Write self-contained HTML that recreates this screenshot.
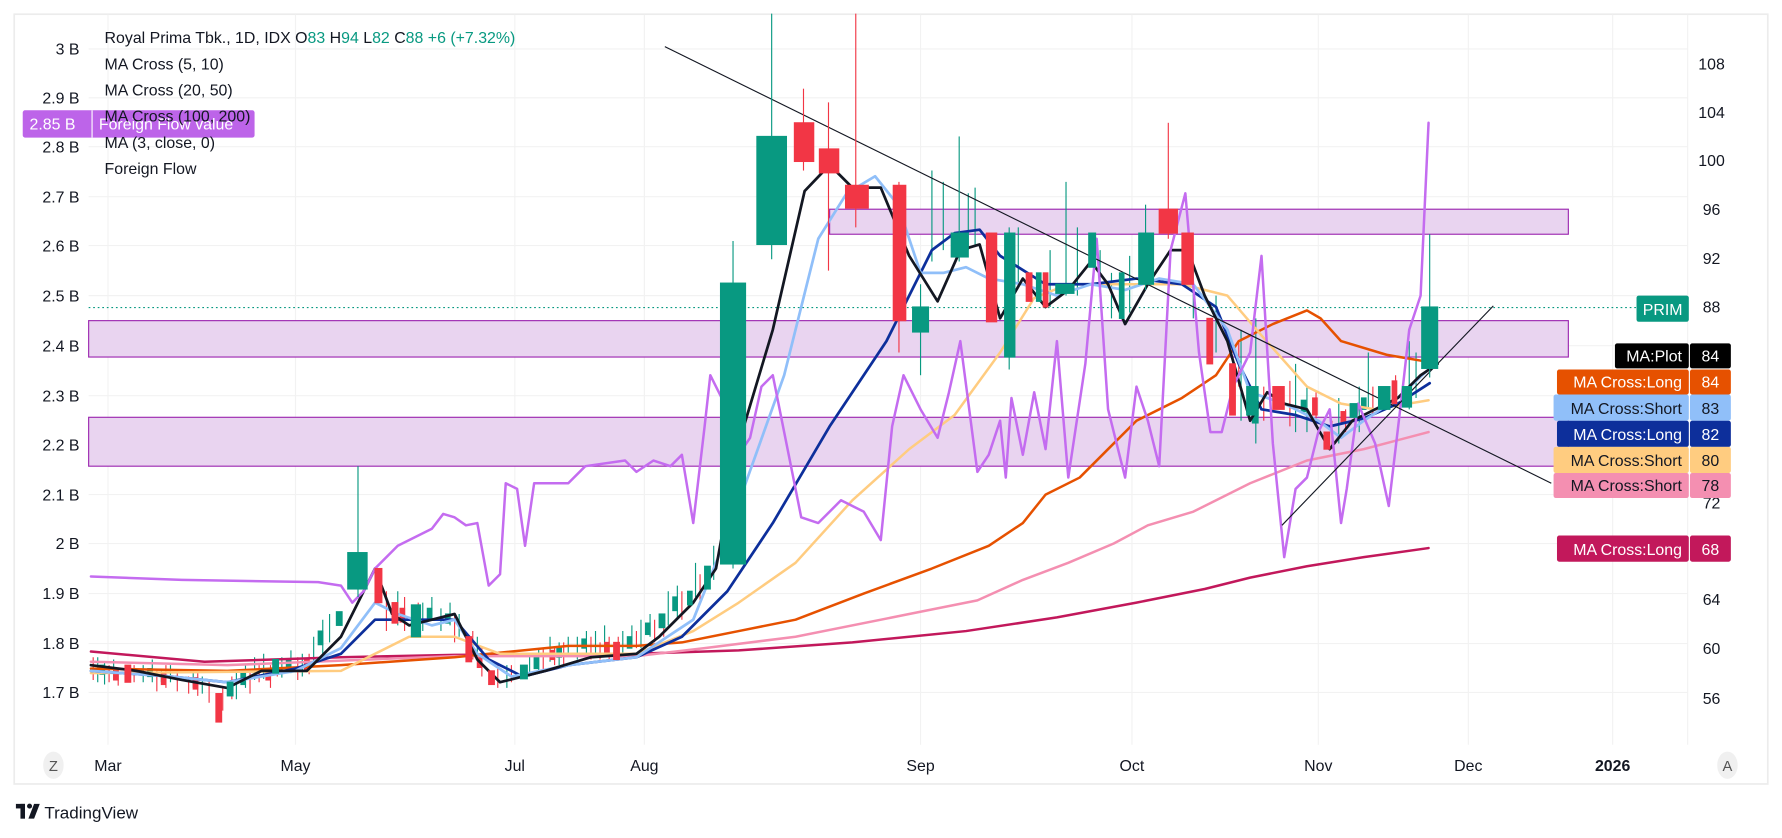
<!DOCTYPE html>
<html><head><meta charset="utf-8"><style>
html,body{margin:0;padding:0;background:#fff;width:1782px;height:838px;overflow:hidden}
svg{display:block}
text{font-family:"Liberation Sans",sans-serif}
</style></head><body>
<svg width="1782" height="838" viewBox="0 0 1568 737" preserveAspectRatio="none" xmlns="http://www.w3.org/2000/svg">
<rect x="0" y="0" width="1568" height="737" fill="#fff"/>
<rect x="12.5" y="12.5" width="1543" height="677" fill="#fff" stroke="#ececec" stroke-width="1.5"/>
<g stroke="#f2f2f2" stroke-width="1">
<line x1="78" x2="1485" y1="43" y2="43"/><line x1="78" x2="1485" y1="86" y2="86"/><line x1="78" x2="1485" y1="129" y2="129"/><line x1="78" x2="1485" y1="173" y2="173"/><line x1="78" x2="1485" y1="216" y2="216"/><line x1="78" x2="1485" y1="260" y2="260"/><line x1="78" x2="1485" y1="304" y2="304"/><line x1="78" x2="1485" y1="348" y2="348"/><line x1="78" x2="1485" y1="391" y2="391"/><line x1="78" x2="1485" y1="435" y2="435"/><line x1="78" x2="1485" y1="478" y2="478"/><line x1="78" x2="1485" y1="522" y2="522"/><line x1="78" x2="1485" y1="566" y2="566"/><line x1="78" x2="1485" y1="609" y2="609"/>
<line x1="95" x2="95" y1="13" y2="655"/><line x1="260" x2="260" y1="13" y2="655"/><line x1="453" x2="453" y1="13" y2="655"/><line x1="567" x2="567" y1="13" y2="655"/><line x1="810" x2="810" y1="13" y2="655"/><line x1="996" x2="996" y1="13" y2="655"/><line x1="1160" x2="1160" y1="13" y2="655"/><line x1="1292" x2="1292" y1="13" y2="655"/><line x1="1419" x2="1419" y1="13" y2="655"/>
<line x1="1485" x2="1485" y1="13" y2="655"/>
</g>
<g fill="#e9d4f0" stroke="#9c27b0" stroke-width="1">
<rect x="730" y="184" width="650" height="22"/>
<rect x="78" y="282" width="1302" height="32"/>
<rect x="78" y="367" width="1302" height="43"/>
</g>
<line x1="78" x2="1440" y1="270.5" y2="270.5" stroke="#089981" stroke-dasharray="1.5 2.5" stroke-width="1"/>
<!-- small candles -->
<g stroke-width="1">
<g stroke="#089981" fill="#089981">
<path d="M86 578v22M92 582v20M100 580v18M126 585v15M134 580v20M142 588v12M150 585v15M170 590v15M178 595v15M208 590v25M216 585v20M224 578v20M232 575v22M248 578v18M256 572v20M266 575v20M276 560v25M284 545v30M290 540v25M350 520v30M372 530v25M380 525v20M388 535v20M396 530v20M404 540v20M420 560v20M446 585v20M466 575v20M474 570v20M484 560v22M492 565v20M500 560v15M508 560v20M516 555v22M524 555v20M532 550v25M548 555v20M556 550v20M564 545v25M572 540v20M588 520v30M596 515v30M612 495v30M628 480v30M820 150v80M830 160v60M852 170v50M858 165v50M896 200v50M924 220v50M938 160v100M948 200v60M968 220v45M978 240v40M994 225v50M1050 230v50M1070 260v50M1092 290v80M1105 280v110M1140 320v60M1150 340v40M1178 350v40M1196 340v40M1204 310v50M1240 300v60M1246 310v40"/>
<rect x="88" y="585" width="4" height="8"/><rect x="130" y="588" width="4" height="7"/><rect x="212" y="592" width="4" height="10"/><rect x="252" y="580" width="4" height="8"/><rect x="280" y="555" width="4" height="12"/><rect x="376" y="535" width="4" height="10"/><rect x="392" y="540" width="4" height="8"/><rect x="470" y="578" width="4" height="10"/><rect x="490" y="570" width="4" height="8"/><rect x="512" y="562" width="4" height="8"/><rect x="552" y="560" width="4" height="10"/><rect x="568" y="548" width="4" height="10"/><rect x="592" y="525" width="4" height="12"/><rect x="1102" y="360" width="5" height="12"/><rect x="1145" y="352" width="4" height="10"/><rect x="1198" y="350" width="4" height="10"/>
</g>
<g stroke="#f23645" fill="#f23645">
<path d="M82 578v20M96 585v15M104 588v15M118 585v15M138 590v18M146 585v20M156 590v18M166 595v15M174 592v20M184 598v20M196 605v20M204 595v20M220 592v18M228 585v15M238 585v20M244 580v15M262 578v20M272 575v18M340 520v35M356 525v30M368 530v20M400 540v25M416 555v25M424 570v25M438 585v20M450 585v15M478 570v20M488 570v15M496 565v20M520 560v20M528 565v15M536 560v20M544 560v20M560 555v15M576 545v20M584 540v20M600 520v25M616 505v25M1090 300v40M1112 340v30M1135 335v40M1158 345v30M1172 370v25M1184 360v20M1208 340v25M1228 330v20"/>
<rect x="100" y="590" width="4" height="8"/><rect x="142" y="592" width="4" height="10"/><rect x="170" y="596" width="4" height="10"/><rect x="234" y="588" width="4" height="10"/><rect x="268" y="580" width="4" height="10"/><rect x="352" y="535" width="4" height="12"/><rect x="420" y="575" width="4" height="12"/><rect x="484" y="572" width="4" height="8"/><rect x="532" y="565" width="4" height="10"/><rect x="1155" y="350" width="4" height="15"/><rect x="1180" y="362" width="4" height="10"/>
</g>
</g>
<g fill="none" stroke-linejoin="round" stroke-linecap="round">
<polyline stroke="#c2185b" stroke-width="2.2" points="80,573 180,582 300,578 400,576 560,575 650,572 750,565 850,555 930,543 1000,530 1060,518 1100,508 1150,498 1200,490 1257,482"/>
<polyline stroke="#f48fb1" stroke-width="2.2" points="80,582 200,585 400,577 560,577 620,570 700,560 800,540 860,528 900,510 940,495 980,478 1010,462 1050,450 1100,425 1150,405 1200,395 1257,380"/>
<polyline stroke="#e65100" stroke-width="2.2" points="80,588 200,590 300,585 400,578 500,568 560,568 600,565 650,555 700,545 760,522 820,500 870,480 900,460 920,435 950,420 980,390 1000,370 1040,350 1070,330 1090,300 1120,285 1150,273 1162,280 1180,300 1220,312 1255,318"/>
<polyline stroke="#ffcc80" stroke-width="2.2" points="80,592 300,590 330,575 360,560 400,560 440,575 500,575 560,575 610,555 650,530 700,495 750,440 800,395 840,365 880,310 910,262 940,250 990,250 1040,250 1080,260 1110,295 1150,340 1180,355 1210,360 1257,352"/>
<polyline stroke="#0d2f9b" stroke-width="2.4" points="80,590 150,595 200,600 260,588 300,575 330,545 360,545 400,545 430,580 460,595 500,585 560,578 600,560 640,520 680,460 730,375 780,300 820,220 840,205 862,202 880,225 920,250 960,250 1000,245 1040,250 1070,270 1090,320 1110,360 1140,365 1170,375 1200,368 1230,355 1258,337"/>
<polyline stroke="#90bff9" stroke-width="2.4" points="80,590 150,595 200,600 260,590 300,570 330,530 350,540 380,550 400,545 420,575 450,595 500,585 560,578 610,545 640,470 690,330 720,210 745,170 770,155 790,180 810,240 830,240 850,235 870,245 900,250 930,260 960,250 990,255 1020,245 1050,250 1080,290 1100,345 1130,355 1160,370 1180,385 1200,370 1230,350 1260,322"/>
<polyline stroke="#131722" stroke-width="2.4" points="80,585 120,590 160,598 200,605 230,590 270,590 300,560 330,500 345,540 360,550 380,545 400,540 420,580 440,600 460,595 480,590 520,578 560,575 580,560 610,530 630,500 650,390 680,290 708,168 730,145 750,165 775,165 800,225 825,265 845,220 862,215 880,280 900,245 920,270 940,255 960,230 975,250 990,285 1010,250 1030,220 1045,220 1060,260 1080,300 1100,370 1115,345 1130,355 1150,360 1170,395 1190,370 1210,360 1230,350 1250,330 1265,320"/>
<polyline stroke="#c46cf0" stroke-width="2.2" points="80,507 160,510 280,512 300,515 310,530 320,520 330,500 350,480 380,465 390,452 400,455 410,462 420,460 430,515 440,505 445,425 455,430 462,480 470,425 500,425 515,410 550,405 560,415 575,405 590,410 600,400 610,460 620,375 625,330 640,360 650,400 660,385 670,340 680,330 690,380 705,455 720,460 740,440 760,450 775,475 785,375 795,330 810,360 825,385 835,345 845,300 860,415 870,400 880,370 885,420 890,350 900,400 910,345 920,395 930,300 940,420 955,320 965,210 975,360 990,420 1000,340 1010,370 1020,410 1030,220 1043,170 1055,310 1065,380 1075,380 1085,340 1100,310 1110,225 1120,390 1130,490 1140,430 1150,420 1160,380 1170,360 1180,460 1185,430 1195,355 1210,390 1222,445 1235,335 1240,290 1250,260 1257,108"/>
</g>
<line x1="585" y1="41" x2="1365" y2="425" stroke="#131722" stroke-width="1"/>
<line x1="1128" y1="462" x2="1314" y2="269" stroke="#131722" stroke-width="1"/>
<g stroke-width="1">
<g fill="#089981" stroke="#089981">
<line x1="645" x2="645" y1="212" y2="500"/><rect x="634" y="249" width="22" height="247"/>
<line x1="679" x2="679" y1="12" y2="228"/><rect x="666" y="120" width="26" height="95"/>
<line x1="315" x2="315" y1="410" y2="525"/><rect x="306" y="486" width="17" height="32"/>
<line x1="810" x2="810" y1="250" y2="330"/><rect x="803" y="270" width="14" height="22"/>
<line x1="844" x2="844" y1="120" y2="230"/><rect x="837" y="205" width="15" height="21"/>
<line x1="888" x2="888" y1="200" y2="325"/><rect x="884" y="205" width="9" height="109"/>
<line x1="1008" x2="1008" y1="180" y2="255"/><rect x="1002" y="205" width="13" height="45"/>
<line x1="1258" x2="1258" y1="206" y2="332"/><rect x="1251" y="270" width="14" height="54"/>
<rect x="929" y="250" width="16" height="8"/><rect x="958" y="205" width="6" height="30"/>
<rect x="1097" y="340" width="10" height="25"/><rect x="1234" y="340" width="8" height="18"/>
<rect x="1213" y="340" width="10" height="20"/><rect x="1188" y="355" width="6" height="12"/>
<rect x="296" y="538" width="5" height="12"/><rect x="362" y="532" width="8" height="28"/>
<rect x="458" y="585" width="6" height="12"/><rect x="580" y="540" width="5" height="12"/>
<rect x="620" y="498" width="5" height="20"/><rect x="605" y="520" width="4" height="12"/>
<rect x="200" y="600" width="5" height="12"/><rect x="240" y="580" width="5" height="12"/>
<rect x="912" y="240" width="4" height="25"/><rect x="985" y="240" width="4" height="40"/>
</g>
<g fill="#f23645" stroke="#f23645">
<line x1="707" x2="707" y1="78" y2="150"/><rect x="699" y="108" width="17" height="34"/>
<line x1="729" x2="729" y1="90" y2="238"/><rect x="721" y="131" width="17" height="21"/>
<line x1="753" x2="753" y1="12" y2="200"/><rect x="744" y="163" width="20" height="20"/>
<line x1="791" x2="791" y1="160" y2="310"/><rect x="786" y="163" width="11" height="119"/>
<rect x="868" y="205" width="9" height="78"/>
<line x1="1028" x2="1028" y1="108" y2="210"/><rect x="1020" y="184" width="16" height="21"/>
<rect x="1040" y="205" width="10" height="45"/>
<rect x="903" y="240" width="5" height="25"/><rect x="918" y="240" width="4" height="30"/>
<rect x="1062" y="280" width="5" height="40"/><rect x="1082" y="320" width="5" height="45"/>
<rect x="1120" y="340" width="10" height="20"/><rect x="1165" y="380" width="5" height="15"/>
<rect x="330" y="500" width="6" height="30"/><rect x="345" y="530" width="5" height="18"/>
<rect x="410" y="560" width="5" height="22"/><rect x="430" y="590" width="5" height="12"/>
<rect x="190" y="610" width="5" height="25"/><rect x="110" y="585" width="5" height="15"/>
<rect x="540" y="565" width="5" height="15"/><rect x="1225" y="335" width="4" height="20"/>
</g>
</g>
<g font-size="14" fill="#131722" style="white-space:pre" xml:space="preserve">
<text x="92" y="38">Royal Prima Tbk., 1D, IDX  O<tspan fill="#089981">83</tspan>  H<tspan fill="#089981">94</tspan>  L<tspan fill="#089981">82</tspan>  C<tspan fill="#089981">88</tspan>  <tspan fill="#089981">+6 (+7.32%)</tspan></text>
<rect x="20" y="97" width="204" height="24" rx="2" fill="#b95ce8" opacity="0.95"/>
<line x1="81" x2="81" y1="97" y2="121" stroke="#fff"/>
<text x="26" y="114" fill="#fff">2.85 B</text><text x="87" y="114" fill="#fff">Foreign Flow value</text>
<text x="92" y="61">MA Cross (5, 10)</text>
<text x="92" y="84">MA Cross (20, 50)</text>
<text x="92" y="107">MA Cross (100, 200)</text>
<text x="92" y="130">MA (3, close, 0)</text>
<text x="92" y="153">Foreign Flow</text>
</g>
<g font-size="14" fill="#131722" text-anchor="end">
<text x="70" y="48">3 B</text><text x="70" y="91">2.9 B</text><text x="70" y="134">2.8 B</text><text x="70" y="178">2.7 B</text><text x="70" y="221">2.6 B</text><text x="70" y="265">2.5 B</text><text x="70" y="309">2.4 B</text><text x="70" y="353">2.3 B</text><text x="70" y="396">2.2 B</text><text x="70" y="440">2.1 B</text><text x="70" y="483">2 B</text><text x="70" y="527">1.9 B</text><text x="70" y="571">1.8 B</text><text x="70" y="614">1.7 B</text>
</g>
<g font-size="14" fill="#131722" text-anchor="middle">
<text x="1506" y="61">108</text><text x="1506" y="104">104</text><text x="1506" y="146">100</text><text x="1506" y="189">96</text><text x="1506" y="232">92</text><text x="1506" y="275">88</text><text x="1506" y="447">72</text><text x="1506" y="532">64</text><text x="1506" y="575">60</text><text x="1506" y="619">56</text>
</g>
<rect x="1440" y="260" width="46" height="23" rx="2" fill="#089981"/>
<text x="1463" y="277" font-size="14" fill="#fff" text-anchor="middle">PRIM</text>
<g font-size="14">
<rect x="1421" y="302" width="65" height="22" rx="2" fill="#000"/><rect x="1487" y="302" width="36" height="22" rx="2" fill="#000"/>
<text x="1480" y="318" fill="#fff" text-anchor="end">MA:Plot</text><text x="1505" y="318" fill="#fff" text-anchor="middle">84</text>
<rect x="1370" y="325" width="116" height="22" rx="2" fill="#e65100"/><rect x="1487" y="325" width="36" height="22" rx="2" fill="#e65100"/>
<text x="1480" y="341" fill="#fff" text-anchor="end">MA Cross:Long</text><text x="1505" y="341" fill="#fff" text-anchor="middle">84</text>
<rect x="1367" y="347" width="119" height="23" rx="2" fill="#90bff9"/><rect x="1487" y="347" width="36" height="23" rx="2" fill="#90bff9"/>
<text x="1480" y="364" fill="#131722" text-anchor="end">MA Cross:Short</text><text x="1505" y="364" fill="#131722" text-anchor="middle">83</text>
<rect x="1370" y="370" width="116" height="23" rx="2" fill="#0d2f9b"/><rect x="1487" y="370" width="36" height="23" rx="2" fill="#0d2f9b"/>
<text x="1480" y="387" fill="#fff" text-anchor="end">MA Cross:Long</text><text x="1505" y="387" fill="#fff" text-anchor="middle">82</text>
<rect x="1367" y="393" width="119" height="23" rx="2" fill="#ffcc80"/><rect x="1487" y="393" width="36" height="23" rx="2" fill="#ffcc80"/>
<text x="1480" y="410" fill="#131722" text-anchor="end">MA Cross:Short</text><text x="1505" y="410" fill="#131722" text-anchor="middle">80</text>
<rect x="1367" y="416" width="119" height="22" rx="2" fill="#f48fb1"/><rect x="1487" y="416" width="36" height="22" rx="2" fill="#f48fb1"/>
<text x="1480" y="432" fill="#131722" text-anchor="end">MA Cross:Short</text><text x="1505" y="432" fill="#131722" text-anchor="middle">78</text>
<rect x="1370" y="471" width="116" height="23" rx="2" fill="#c2185b"/><rect x="1487" y="471" width="36" height="23" rx="2" fill="#c2185b"/>
<text x="1480" y="488" fill="#fff" text-anchor="end">MA Cross:Long</text><text x="1505" y="488" fill="#fff" text-anchor="middle">68</text>
</g>
<g font-size="14" fill="#131722" text-anchor="middle">
<ellipse cx="47" cy="673" rx="9" ry="12" fill="#f0f0f0"/><text x="47" y="678" font-size="13" fill="#555">Z</text>
<ellipse cx="1520" cy="673" rx="9" ry="12" fill="#f0f0f0"/><text x="1520" y="678" font-size="13" fill="#555">A</text>
<text x="95" y="678">Mar</text><text x="260" y="678">May</text><text x="453" y="678">Jul</text><text x="567" y="678">Aug</text><text x="810" y="678">Sep</text><text x="996" y="678">Oct</text><text x="1160" y="678">Nov</text><text x="1292" y="678">Dec</text><text x="1419" y="678" font-weight="bold">2026</text>
</g>
<g fill="#131722">
<rect x="14" y="707" width="8" height="4"/><rect x="18" y="707" width="4" height="13"/>
<circle cx="26" cy="709" r="2.2"/><path d="M30 707 L35 707 L30 720 L25 720 Z"/>
<text x="39" y="720" font-size="15">TradingView</text>
</g>
</svg>
</body></html>
